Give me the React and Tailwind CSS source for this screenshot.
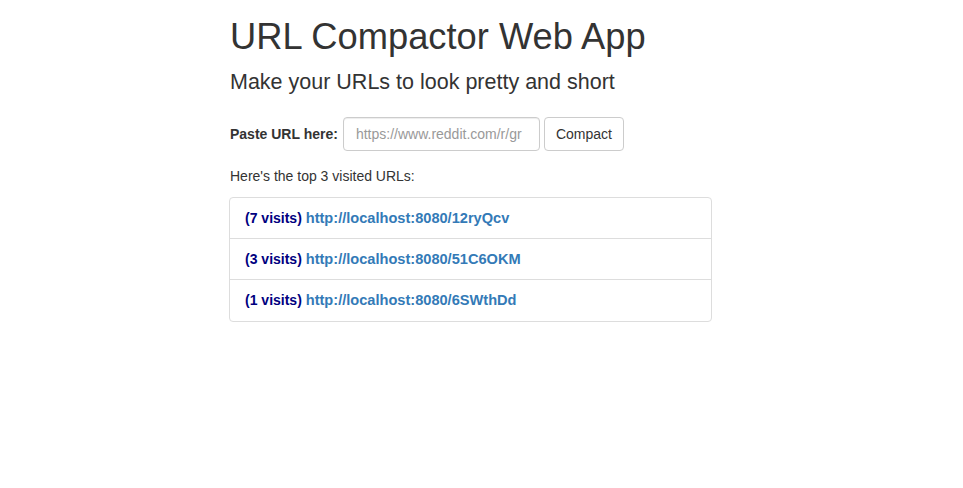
export default function App() {
  const items = [
    ["7", "http://localhost:8080/12ryQcv"],
    ["3", "http://localhost:8080/51C6OKM"],
    ["1", "http://localhost:8080/6SWthDd"],
  ];
  return (
    <div className="min-h-[488px] bg-white text-[14px] leading-[20px] text-[#333]" style={{ fontFamily: '"Liberation Sans", Arial, sans-serif' }}>
      <div className="ml-[230px] w-[482px]">
        <h1 className="pt-[17px] text-[36.3px] leading-[40px] font-normal">URL Compactor Web App</h1>
        <h3 className="mt-[13px] text-[21.5px] leading-[24px] font-normal">Make your URLs to look pretty and short</h3>
        <div className="mt-[23px] flex items-center">
          <label className="font-bold mr-[5px]">Paste URL here:</label>
          <input
            className="h-[34px] w-[197px] rounded-[4px] border border-[#ccc] px-[12px] text-[14px] text-[#555] placeholder:text-[#999] outline-none shadow-[inset_0_1px_1px_rgba(0,0,0,0.075)]"
            placeholder="https://www.reddit.com/r/gr"
          />
          <button className="ml-[4px] h-[34px] rounded-[4px] border border-[#ccc] bg-white px-[11px] text-[14px] text-[#333]">Compact</button>
        </div>
        <p className="mt-[15px]">Here's the top 3 visited URLs:</p>
        <ul className="-ml-px mt-[11px] w-[483px] rounded-[4px] border border-[#ddd]">
          {items.map(([n, url], i) => (
            <li key={i} className={`px-[15px] py-[10px] ${i > 0 ? "border-t border-[#ddd]" : ""} ${i === 2 ? "pb-[11px]" : ""}`}>
              <span className="font-bold text-[#000080]">({n} visits)</span>{" "}
              <a href="#" className="font-bold text-[14.6px] text-[#337ab7]">{url}</a>
            </li>
          ))}
        </ul>
      </div>
    </div>
  );
}
